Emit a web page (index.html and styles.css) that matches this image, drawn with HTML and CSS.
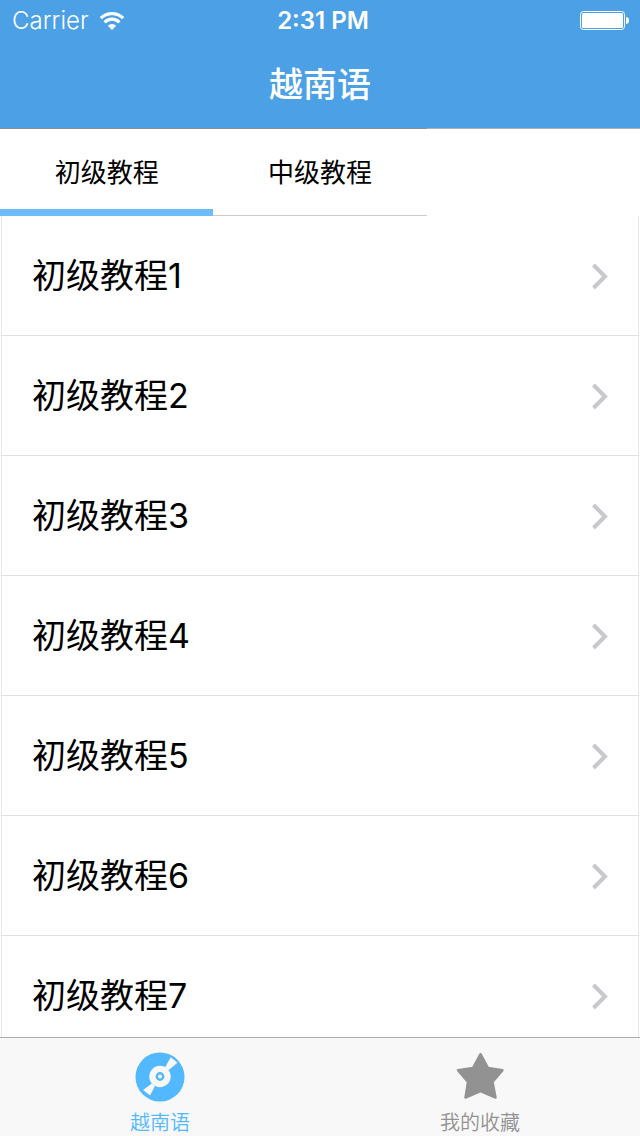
FILE: index.html
```html
<!DOCTYPE html>
<html lang="zh-CN">
<head>
<meta charset="utf-8">
<meta name="viewport" content="width=device-width, initial-scale=1">
<title>越南语</title>
<link rel="stylesheet" href="styles.css">
</head>
<body>
<header class="header">
  <div class="status">
    <div class="carrier">
      <span>Carrier</span>
      <svg class="wifi" width="26" height="20" viewBox="0 0 26 20" fill="none" stroke="#fff" stroke-width="3.2" aria-hidden="true">
        <path d="M1.8 7.2a15.8 15.8 0 0 1 22.4 0"/>
        <path d="M5.6 11.3a10.4 10.4 0 0 1 14.8 0"/>
        <path d="M13 19 8.8 14.7a6 6 0 0 1 8.4 0z" fill="#fff" stroke="none"/>
      </svg>
    </div>
    <time class="clock">2:31 PM</time>
    <svg class="battery" width="50" height="20" viewBox="0 0 50 20" aria-hidden="true">
      <rect x="0.5" y="0.5" width="44" height="18" rx="3" fill="none" stroke="#fff"/>
      <rect x="2" y="2" width="41" height="15" rx="1.5" fill="#fff"/>
      <path d="M46 6c2 0 3 1.500 3 3.500s-1 3.500-3 3.500z" fill="#fff"/>
    </svg>
  </div>
  <h1 class="title">越南语</h1>
</header>

<nav class="tabs" aria-label="教程">
  <button class="tab tab-active" type="button">初级教程</button>
  <button class="tab" type="button">中级教程</button>
</nav>

<main class="content">
  <ul class="list">
    <li><a class="row" href="#1">初级教程1<svg class="chevron" width="18" height="28" viewBox="0 0 18 28" aria-hidden="true"><path d="M1.500 3 13 14.500 1.500 26"/></svg></a></li>
    <li><a class="row" href="#2">初级教程2<svg class="chevron" width="18" height="28" viewBox="0 0 18 28" aria-hidden="true"><path d="M1.500 3 13 14.500 1.500 26"/></svg></a></li>
    <li><a class="row" href="#3">初级教程3<svg class="chevron" width="18" height="28" viewBox="0 0 18 28" aria-hidden="true"><path d="M1.500 3 13 14.500 1.500 26"/></svg></a></li>
    <li><a class="row" href="#4">初级教程4<svg class="chevron" width="18" height="28" viewBox="0 0 18 28" aria-hidden="true"><path d="M1.500 3 13 14.500 1.500 26"/></svg></a></li>
    <li><a class="row" href="#5">初级教程5<svg class="chevron" width="18" height="28" viewBox="0 0 18 28" aria-hidden="true"><path d="M1.500 3 13 14.500 1.500 26"/></svg></a></li>
    <li><a class="row" href="#6">初级教程6<svg class="chevron" width="18" height="28" viewBox="0 0 18 28" aria-hidden="true"><path d="M1.500 3 13 14.500 1.500 26"/></svg></a></li>
    <li><a class="row" href="#7">初级教程7<svg class="chevron" width="18" height="28" viewBox="0 0 18 28" aria-hidden="true"><path d="M1.500 3 13 14.500 1.500 26"/></svg></a></li>
  </ul>
</main>

<nav class="bottom" aria-label="主导航">
  <a class="nav-item nav-active" href="#home">
    <svg width="50" height="50" viewBox="0 0 50 50" aria-hidden="true">
      <circle cx="25" cy="25" r="24.500" fill="#52b8ff"/>
      <path d="M35.700 5.300 42.500 10.800 32.500 19 29.500 16.500zM15 43.500 8 38 17 31.500 20 34z" fill="#f8f8f8"/>
      <circle cx="25" cy="24.500" r="10.700" fill="#f8f8f8"/>
      <circle cx="25" cy="24.500" r="3.200" fill="#f8f8f8" stroke="#52b8ff" stroke-width="2.400"/>
    </svg>
    <span>越南语</span>
  </a>
  <a class="nav-item" href="#favorites">
    <svg width="50" height="50" viewBox="0 0 50 50" aria-hidden="true">
      <path d="M25.500 2.200 33 16 47.500 18.300 37.500 30 40.500 45.500 25.500 39 10.500 45.500 13 30 3 18.300 18 16z" fill="#929292" stroke="#929292" stroke-width="2.500" stroke-linejoin="round"/>
    </svg>
    <span>我的收藏</span>
  </a>
</nav>
</body>
</html>
```
FILE: styles.css
```css
* {
  box-sizing: border-box;
}

body {
  display: flex;
  flex-direction: column;
  height: 100vh;
  margin: 0;
  background: #fff;
  color: #000;
  font-family: Inter, "Noto Sans CJK SC", sans-serif;
}

a {
  color: inherit;
  text-decoration: none;
}

.header {
  flex: none;
  background: #4ca0e5;
  color: #fff;
}

.status {
  display: grid;
  grid-template-columns: 1fr auto 1fr;
  align-items: center;
  height: 41px;
  padding: 0 10px 0 12px;
  font-size: 24px;
  line-height: 42px;
}

.carrier {
  display: flex;
  align-items: center;
  gap: 10px;
  font-weight: 350;
}

.clock {
  padding-left: 4px;
  font-weight: 600;
}

.battery {
  justify-self: end;
}

.title {
  height: 87px;
  margin: 0;
  font-size: 34px;
  font-weight: 500;
  line-height: 88px;
  text-align: center;
}

.tabs {
  display: grid;
  flex: none;
  grid-template-columns: repeat(3, 1fr);
  height: 88px;
}

.tabs::after {
  border-top: 1px solid #b2b2b2;
  content: "";
}

.tab {
  padding: 0 0 4px;
  border: 0;
  border-top: 1px solid #8e8e8e;
  border-bottom: 1px solid #ccc;
  background: #fff;
  color: #000;
  font: inherit;
  font-size: 26px;
}

.tab-active {
  padding: 2px 0 0;
  border-bottom: 7px solid #6dbcfb;
}

.content {
  flex: 1;
  min-height: 0;
  margin: 0 1px;
  overflow: hidden;
  border: solid #e8e8e8;
  border-width: 0 1px;
}

.list {
  margin: 0;
  padding: 0;
  list-style: none;
}

.row {
  display: flex;
  align-items: center;
  justify-content: space-between;
  height: 120px;
  padding: 0 28px 0 30px;
  border-bottom: 1px solid #e0e0e0;
  font-size: 34px;
  line-height: 50px;
}

.chevron {
  fill: none;
  stroke: #c7c7cc;
  stroke-width: 4;
}

.bottom {
  display: grid;
  flex: none;
  grid-template-columns: 1fr 1fr;
  height: 99px;
  border-top: 1px solid #adadad;
  background: #f8f8f8;
}

.nav-item {
  display: flex;
  flex-direction: column;
  align-items: center;
  gap: 8px;
  padding-top: 14px;
  color: #929292;
  font-size: 20px;
  font-weight: 350;
  line-height: 26px;
}

.nav-active {
  color: #52b8ff;
}
```
